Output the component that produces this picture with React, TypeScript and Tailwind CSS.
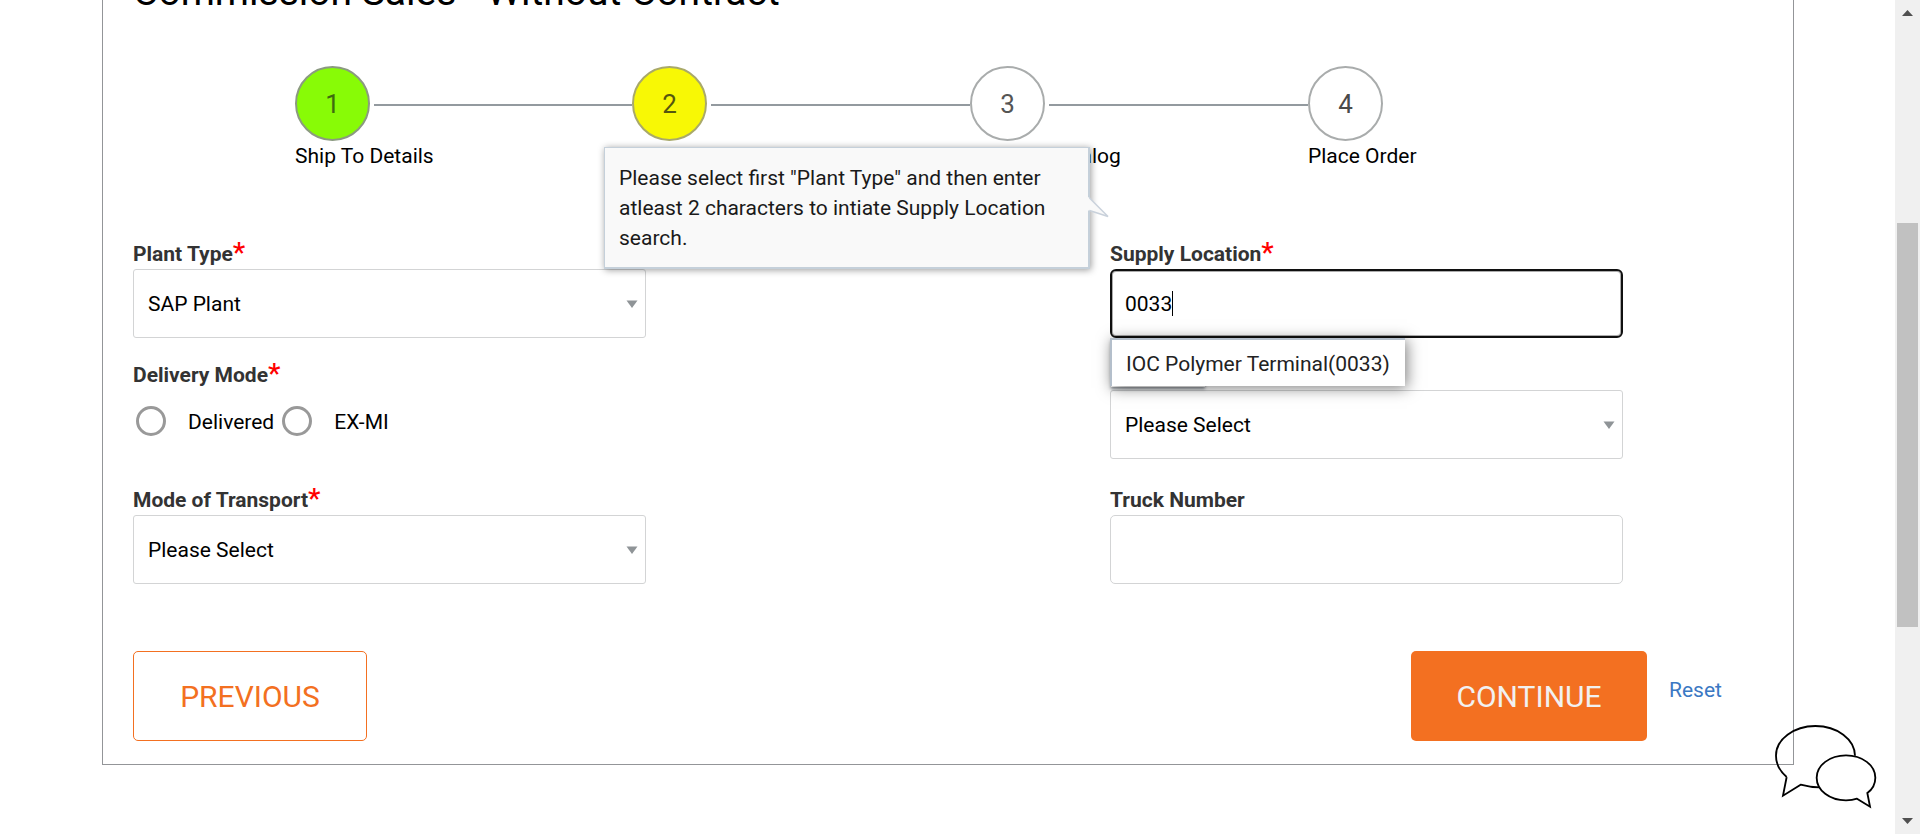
import React from "react";

const steps = [
  { n: 1, label: "Ship To Details", cell: "w-[337px] shrink-0", tone: "bg-[#88fb06] border-[#8b9a80] text-[#3f6a10]" },
  { n: 2, label: "", cell: "w-[338px] shrink-0", tone: "bg-[#f8f805] border-[#a9a96a] text-[#55560f]" },
  { n: 3, label: "Product Catalog", cell: "w-[338px] shrink-0", tone: "bg-white border-[#a9acac] text-[#555]" },
  { n: 4, label: "Place Order", cell: "shrink-0", tone: "bg-white border-[#a9acac] text-[#4a4a4a]" },
];

function Stepper() {
  return (
    <div className="flex pl-[162px]">
      {steps.map((s, i) => (
        <div key={s.n} className={s.cell}>
          <div className="flex items-center">
            <div
              className={`flex size-[75px] shrink-0 items-center justify-center rounded-full border-2 pt-[2px] text-[26px] ${s.tone}`}
            >
              {s.n}
            </div>
            {i < 3 && <div className="mt-[3px] ml-1 h-[2px] flex-1 bg-[#939a9f]" />}
          </div>
          <div className="h-[30px] whitespace-nowrap leading-[30px]">{s.label}</div>
        </div>
      ))}
    </div>
  );
}

function Label({ text, required }: { text: string; required?: boolean }) {
  return (
    <div className="flex h-[30px] items-start leading-[30px] font-bold text-[#333]">
      {text}
      {required && <span className="text-[28px] leading-[28px] font-medium text-[#f00]">*</span>}
    </div>
  );
}

function Select({ value }: { value: string }) {
  return (
    <div className="flex h-[69px] items-center justify-between rounded-[3px] border border-[#d3d4d5] bg-white pr-[7px] pl-[14px]">
      <span className="pt-[2px]">{value}</span>
      <svg className="h-[8px] w-[12px]" viewBox="0 0 12 8">
        <path d="M0.5 0.5h11L6 8z" fill="#8f9497" />
      </svg>
    </div>
  );
}

function Radio({ label }: { label: string }) {
  return (
    <label className="flex h-[30px] items-center">
      <span className="mr-[22px] size-[30px] rounded-full border-3 border-[#999]" />
      <span className="pt-[3px]">{label}</span>
    </label>
  );
}

function Tooltip() {
  return (
    <div className="absolute top-[147px] left-[604px] h-[122px] w-[486px] border-2 border-t-1 border-l-1 border-[#c5d0da] bg-[#f9f9f9] pt-[15px] pl-[14px] leading-[30px] text-[#1a1a1a] shadow-[1px_1px_7px_rgba(0,0,0,0.4)]">
      Please select first "Plant Type" and then enter
      <br />
      atleast 2 characters to intiate Supply Location
      <br />
      search.
      <svg className="absolute top-[49px] left-[483px] h-[22px] w-[22px]" viewBox="0 0 22 22">
        <path d="M0 0L1.5 1L20 19.5L1.5 13.5L0 13.5z" fill="#f9f9f9" />
        <path d="M1.5 1L20 19.5L1.5 13.5" fill="none" stroke="#c9d1db" strokeWidth="1.5" />
      </svg>
    </div>
  );
}

function ChatIcon() {
  return (
    <svg
      className="absolute top-[720px] left-[1770px] h-[92px] w-[110px]"
      viewBox="390 360 330 276"
      fill="none"
      stroke="#000"
      strokeWidth="5.5"
    >
      <path d="M440 531L429 587L482 554Q510 562 540 562M440 531C420 514 408 493 408 467C408 418 461 378 526 378C592 378 644 418 645 467" />
      <path
        d="M682 579L690 620L651 596C640 600 630 601 618 601C569 601 530 571 530 533C530 496 569 466 618 466C667 466 706 496 706 533C706 552 697 568 682 579Z"
        fill="#fff"
      />
    </svg>
  );
}

function Scrollbar() {
  return (
    <div className="flex h-full w-[25px] shrink-0 flex-col items-center bg-[#f0f0f0]">
      <svg className="mt-[10px] h-[6px] w-[11px]" viewBox="0 0 11 6">
        <path d="M0 6L5.5 0L11 6z" fill="#505050" />
      </svg>
      <div className="mt-[207px] h-[404px] w-[21px] bg-[#c1c1c1]" />
      <svg className="mt-[191px] h-[6px] w-[11px]" viewBox="0 0 11 6">
        <path d="M0 0L5.5 6L11 0z" fill="#505050" />
      </svg>
    </div>
  );
}

export default function App() {
  return (
    <div className="relative flex h-[834px] w-[1920px] overflow-hidden bg-white font-['Roboto',sans-serif] text-[21px] text-black">
      <main className="flex-1">
        <div className="ml-[102px] flex h-[765px] w-[1692px] flex-col border-x border-b border-[#939598] px-[30px]">
          <h1 className="-mt-[32px] h-[98px] shrink-0 text-[39px] leading-[48px] whitespace-nowrap">
            Commission Sales - Without Contract
          </h1>
          <Stepper />
          <div className="mt-[68px] grid grid-cols-[513px_513px] gap-x-[464px]">
            <div className="h-[121px]">
              <Label text="Plant Type" required />
              <Select value="SAP Plant" />
            </div>
            <div className="h-[121px]">
              <Label text="Supply Location" required />
              <div className="flex h-[69px] items-center rounded-[6px] border-2 border-[#101010] pl-[13px] shadow-[inset_0_0_0_1px_rgba(16,16,16,0.35)]">
                <span className="pt-[2px]">0033</span>
                <span className="h-[25px] w-px bg-black" />
              </div>
            </div>
            <div className="h-[125px]">
              <Label text="Delivery Mode" required />
              <div className="mt-[16px] flex gap-[8px] pl-[3px]">
                <Radio label="Delivered" />
                <Radio label="EX-MI" />
              </div>
            </div>
            <div className="h-[125px] pt-[30px]">
              <Select value="Please Select" />
            </div>
            <div>
              <Label text="Mode of Transport" required />
              <Select value="Please Select" />
            </div>
            <div>
              <Label text="Truck Number" />
              <div className="h-[69px] rounded-[5px] border border-[#d3d4d5]" />
            </div>
          </div>
          <div className="mt-[67px] flex items-start">
            <button className="h-[90px] w-[234px] rounded-[5px] border border-[#f37021] text-[30px] text-[#f37021]">
              PREVIOUS
            </button>
            <button className="ml-[1044px] h-[90px] w-[236px] rounded-[5px] bg-[#f37021] text-[30px] text-[#f1f1f1]">
              CONTINUE
            </button>
            <a className="mt-[24px] ml-[22px] leading-[30px] text-[#3b78c3]">Reset</a>
          </div>
        </div>
      </main>
      <Scrollbar />
      <Tooltip />
      <div className="absolute top-[339px] left-[1111px] h-[48px] w-[94px] shadow-[0_2px_3px_rgba(60,70,80,0.6)]" />
      <div className="absolute top-[338px] left-[1110px] flex h-[48px] w-[295px] items-center border-t-2 border-l-2 border-[#b4bfcb] bg-white pt-[4px] pl-[14px] text-[#222] shadow-[2px_2px_14px_rgba(0,0,0,0.5)]">
        IOC Polymer Terminal(0033)
      </div>
      <ChatIcon />
    </div>
  );
}
